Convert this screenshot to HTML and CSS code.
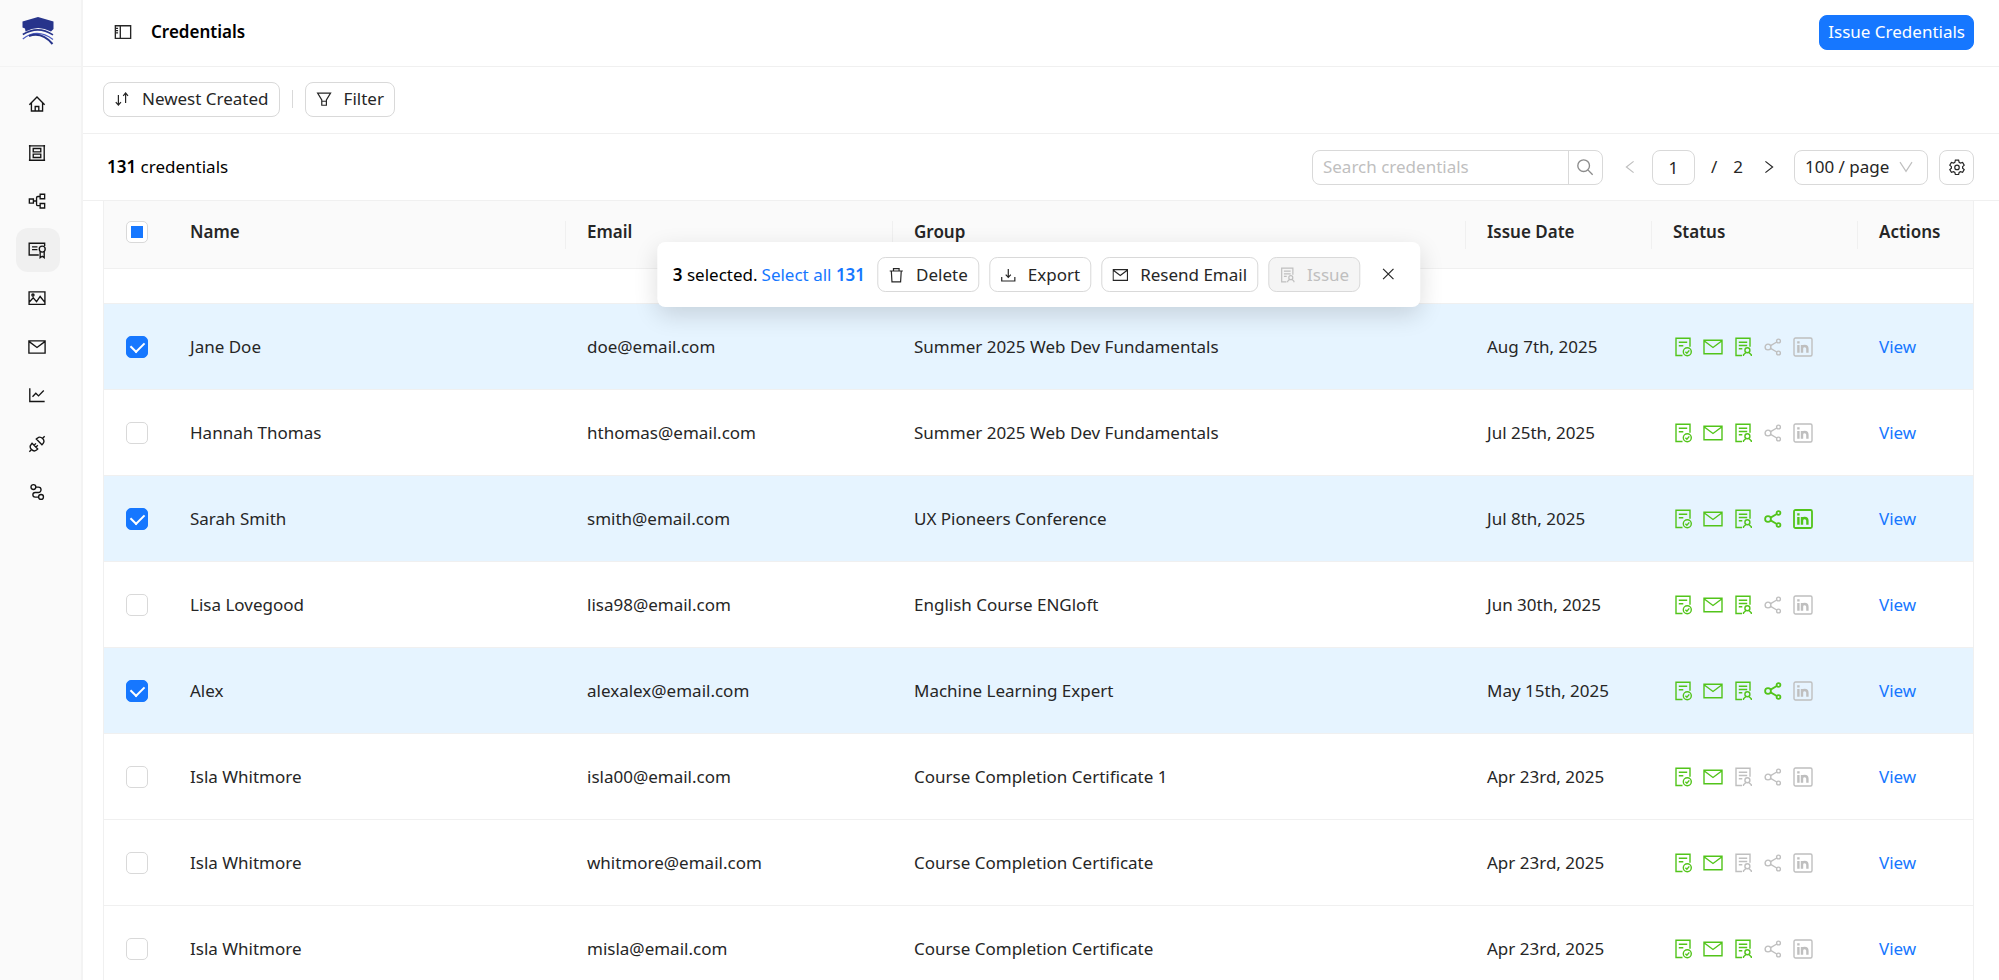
FILE: index.html
```
<!DOCTYPE html>
<html lang="en">

<head>
    <meta charset="UTF-8">
    <meta name="viewport" content="width=device-width, initial-scale=1.0">
    <title>Credentials</title>
    <link rel="stylesheet" href="styles.css">
</head>

<body>
    <!-- icon sprite -->
    <svg class="sprite" aria-hidden="true">
        <symbol id="i-home" viewBox="0 0 20 20"><path d="M1.5 10.8 10 2.3l8.500 8.500M3.800 9v8.800h12.400V9M8 17.800v-5h4v5" /></symbol>
        <symbol id="i-template" viewBox="0 0 20 20"><path d="M2 2h16v16H2zM5.800 5h8.400v3.800H5.800zM5.800 11.200h8.400V15H5.800zM1 2h2M17 2h2M1 18h2M17 18h2M2 1v2M18 1v2M2 17v2M18 17v2" /></symbol>
        <symbol id="i-tree" viewBox="0 0 20 20"><path d="M1.500 7.800h4.500v4.500H1.500zM13.500 2.500h5v5h-5zM13.500 12.800h5v5h-5zM6 10h3.500M13.500 5H11q-1.500 0-1.500 1.500v7q0 1.700 1.500 1.700h2.500" /></symbol>
        <symbol id="i-cert" viewBox="0 0 20 20"><path d="M12 15.500H1.300v-13h17.200v3M4.500 6.500h6M4.500 9.500h6M13.500 12v6.500l2.300-1.500 2.200 1.500V12" /><circle cx="15.800" cy="9" r="3.300" /></symbol>
        <symbol id="i-image" viewBox="0 0 20 20"><path d="M1.200 3.200h17.600v13.800H1.200zM1.500 14.500l4.300-4.700 3.700 4.200 4-5.700 5 6.200" /><circle cx="5.500" cy="6.800" r="1.200" /></symbol>
        <symbol id="i-mail" viewBox="0 0 20 20"><path d="M1 3.200h18v13.600H1zM1.300 4l8.700 6.500L18.700 4" /></symbol>
        <symbol id="i-chart" viewBox="0 0 20 20"><path d="M2 2.500v14.700h16.500M5 12l3.700-4 3 3L17.500 5" /></symbol>
        <symbol id="i-api" viewBox="0 0 20 20"><path d="M1.500 18.500l2.200-2.200M18.500 1.500l-2.200 2.200M4.500 9.200l6.300 6.300-1.300 1.200q-2.800 2.300-5.500-.5-3-3-.5-5.700zM9.200 4.500l6.300 6.300 1.200-1.300q2.300-2.800-.5-5.500-3-3-5.700-.5zM6.800 11.300l2-2M8.900 13.300l2-2" /></symbol>
        <symbol id="i-flow" viewBox="0 0 20 20"><circle cx="6" cy="4.500" r="2.700" /><circle cx="14.500" cy="15.500" r="2.700" /><path d="M8.700 4.500h2.800a2.700 2.700 0 0 1 0 6H8a2.500 2.500 0 0 0 0 5.200h3.800" /></symbol>
        <symbol id="i-panel" viewBox="0 0 20 20"><path d="M1.500 3h17v14h-17zM7 3v14M1.500 6h3M1.500 8.500h3M1.500 11h3" /></symbol>
        <symbol id="i-sort" viewBox="0 0 20 20"><path d="M5.500 5v12M2.200 14l3.300 3.500L8.700 14M14.500 15V3M11.500 6l3-3.500 3 3.500" /></symbol>
        <symbol id="i-filter" viewBox="0 0 20 20"><path d="M2 2.700h16.200l-5.200 8.500v6.600H7.200v-6.600zM7.200 12.800H13" /></symbol>
        <symbol id="i-search" viewBox="0 0 20 20"><circle cx="8.500" cy="8.500" r="6.500" /><path d="M13.200 13.200l5.300 5.300" /></symbol>
        <symbol id="i-left" viewBox="0 0 20 20"><path d="M14.500 3 5.500 10l9 7" /></symbol>
        <symbol id="i-right" viewBox="0 0 20 20"><path d="M5.500 3l9 7-9 7" /></symbol>
        <symbol id="i-down" viewBox="0 0 20 20"><path d="M2.500 4l7.500 11.500L17.500 4" /></symbol>
        <symbol id="i-gear" viewBox="0 0 20 20"><path d="M8 1.500h4l.7 2.700 1.600.9 2.700-.8 2 3.400-2 1.900v1.800l2 1.900-2 3.400-2.700-.8-1.600.9-.7 2.700H8l-.7-2.700-1.600-.9-2.700.8-2-3.400 2-1.900V9.600L1 7.700l2-3.400 2.700.8 1.600-.9z" /><circle cx="10" cy="10.500" r="2.800" /></symbol>
        <symbol id="i-trash" viewBox="0 0 20 20"><path d="M1.800 5h16.400M6.500 5V2h7v3M3.800 5l.8 13.500h10.800L16.200 5" /></symbol>
        <symbol id="i-export" viewBox="0 0 20 20"><path d="M10 2.500v10M6.800 9.500l3.200 3.500 3.200-3.500M1.800 12.500v5h16.400v-5" /></symbol>
        <symbol id="i-close" viewBox="0 0 20 20"><path d="M3.500 3.500l13 13M16.500 3.500l-13 13" /></symbol>
        <symbol id="i-done" viewBox="0 0 20 20"><path d="M9.500 18.500H3V1.300h14v8.500M5.800 5.200h8.400M5.800 8.700h4.500" /><circle cx="14.300" cy="14.800" r="4" /><path d="M12.400 14.800l1.500 1.500 2.400-2.900" /></symbol>
        <symbol id="i-issued" viewBox="0 0 20 20"><path d="M9 18.500H3V1.300h14v8.500M5.800 5.200h8.400M5.800 8.500h8.400M5.800 11.800h3.500M10.500 19v-1.300l2.200-2M18.300 19v-1.300l-2.200-2" /><circle cx="14.400" cy="13.300" r="2.500" /></symbol>
        <symbol id="i-share" viewBox="0 0 20 20"><circle cx="5" cy="10" r="2.900" /><circle cx="15.500" cy="4" r="1.900" /><circle cx="15.500" cy="16" r="1.900" /><path d="M7.600 8.600 13.800 5M7.600 11.400l6.200 3.600" /></symbol>
        <symbol id="i-linkedin" viewBox="0 0 20 20"><rect x="1" y="1" width="18" height="18" rx="1.500" /><path class="bold" d="M5.400 8v7.800M9 8v7.800M9 15.500v-4q0-2.500 2.700-2.500t2.700 2.700v4.100M5.400 4.200v2.400" /></symbol>
    </svg>

    <div class="app">
        <aside class="sidebar">
            <a href="#" class="logo" aria-label="Home">
                <svg viewBox="0 0 32 28" width="32" height="28">
                    <path fill="#27348b" d="M.5 4.500 16 0l15.500 4.500v7.500l-2.500 2.500Q16 7.500 3.500 14.500L3 11.500.5 10.500z" />
                    <path fill="none" stroke="#27348b" stroke-width="1.600" d="M.8 17.500Q16 8 31 17.800" />
                    <path fill="none" stroke="#4a5bc0" stroke-width="1.200" d="M.8 22Q15 10.500 31 22.500" />
                    <path fill="none" stroke="#27348b" stroke-width="2" d="M7 19q13-4.500 23.500 8" />
                </svg>
            </a>
            <nav class="nav">
                <a href="#" aria-label="Dashboard"><svg class="icon"><use href="#i-home" /></svg></a>
                <a href="#" aria-label="Groups"><svg class="icon"><use href="#i-template" /></svg></a>
                <a href="#" aria-label="Pathways"><svg class="icon"><use href="#i-tree" /></svg></a>
                <a href="#" class="active" aria-label="Credentials"><svg class="icon"><use href="#i-cert" /></svg></a>
                <a href="#" aria-label="Designs"><svg class="icon"><use href="#i-image" /></svg></a>
                <a href="#" aria-label="Emails"><svg class="icon"><use href="#i-mail" /></svg></a>
                <a href="#" aria-label="Analytics"><svg class="icon"><use href="#i-chart" /></svg></a>
                <a href="#" aria-label="Integrations"><svg class="icon"><use href="#i-api" /></svg></a>
                <a href="#" aria-label="Workflows"><svg class="icon"><use href="#i-flow" /></svg></a>
            </nav>
        </aside>

        <main class="main">
            <header class="bar bar-top">
                <button class="plain" aria-label="Toggle sidebar"><svg class="icon"><use href="#i-panel" /></svg></button>
                <h1>Credentials</h1>
                <button class="btn primary push">Issue Credentials</button>
            </header>

            <div class="bar bar-top">
                <button class="btn"><svg class="icon"><use href="#i-sort" /></svg>Newest Created</button>
                <span class="divider"></span>
                <button class="btn"><svg class="icon"><use href="#i-filter" /></svg>Filter</button>
            </div>

            <div class="bar">
                <p class="count"><b>131</b> credentials</p>
                <div class="search push">
                    <input type="text" placeholder="Search credentials" aria-label="Search credentials">
                    <button aria-label="Search"><svg class="icon"><use href="#i-search" /></svg></button>
                </div>
                <div class="pager">
                    <button class="plain off" aria-label="Previous page"><svg class="icon small"><use href="#i-left" /></svg></button>
                    <input type="text" value="1" aria-label="Page">
                    <span>/</span>
                    <span>2</span>
                    <button class="plain" aria-label="Next page"><svg class="icon small"><use href="#i-right" /></svg></button>
                </div>
                <div class="select">
                    <select aria-label="Page size">
                        <option>100 / page</option>
                        <option>50 / page</option>
                    </select>
                    <svg class="icon small"><use href="#i-down" /></svg>
                </div>
                <button class="btn square" aria-label="Table settings"><svg class="icon"><use href="#i-gear" /></svg></button>
            </div>

            <div class="table-wrap">
                <div class="selection">
                    <span><b>3</b> selected.</span>
                    <a href="#">Select all <b>131</b></a>
                    <div class="selection-actions">
                        <button class="btn"><svg class="icon"><use href="#i-trash" /></svg>Delete</button>
                        <button class="btn"><svg class="icon"><use href="#i-export" /></svg>Export</button>
                        <button class="btn"><svg class="icon"><use href="#i-mail" /></svg>Resend Email</button>
                        <button class="btn" disabled><svg class="icon"><use href="#i-issued" /></svg>Issue</button>
                        <button class="plain close" aria-label="Clear selection"><svg class="icon small"><use href="#i-close" /></svg></button>
                    </div>
                </div>

                <table>
                    <colgroup>
                        <col class="col-check">
                        <col class="col-name">
                        <col class="col-email">
                        <col>
                        <col class="col-date">
                        <col class="col-status">
                        <col class="col-actions">
                    </colgroup>
                    <thead>
                        <tr>
                            <th><input type="checkbox" class="partial" aria-label="Select all rows"></th>
                            <th>Name</th>
                            <th class="split">Email</th>
                            <th class="split">Group</th>
                            <th class="split">Issue Date</th>
                            <th class="split">Status</th>
                            <th class="split">Actions</th>
                        </tr>
                    </thead>
                    <tbody>
                        <tr class="cut"><td colspan="7"></td></tr>
                        <tr class="selected">
                            <td><input type="checkbox" checked aria-label="Select Jane Doe"></td>
                            <td>Jane Doe</td>
                            <td>doe@email.com</td>
                            <td>Summer 2025 Web Dev Fundamentals</td>
                            <td>Aug 7th, 2025</td>
                            <td><div class="status"><svg class="on"><use href="#i-done" /></svg><svg class="on"><use href="#i-mail" /></svg><svg class="on"><use href="#i-issued" /></svg><svg><use href="#i-share" /></svg><svg><use href="#i-linkedin" /></svg></div></td>
                            <td><a href="#">View</a></td>
                        </tr>
                        <tr>
                            <td><input type="checkbox" aria-label="Select Hannah Thomas"></td>
                            <td>Hannah Thomas</td>
                            <td>hthomas@email.com</td>
                            <td>Summer 2025 Web Dev Fundamentals</td>
                            <td>Jul 25th, 2025</td>
                            <td><div class="status"><svg class="on"><use href="#i-done" /></svg><svg class="on"><use href="#i-mail" /></svg><svg class="on"><use href="#i-issued" /></svg><svg><use href="#i-share" /></svg><svg><use href="#i-linkedin" /></svg></div></td>
                            <td><a href="#">View</a></td>
                        </tr>
                        <tr class="selected">
                            <td><input type="checkbox" checked aria-label="Select Sarah Smith"></td>
                            <td>Sarah Smith</td>
                            <td>smith@email.com</td>
                            <td>UX Pioneers Conference</td>
                            <td>Jul 8th, 2025</td>
                            <td><div class="status"><svg class="on"><use href="#i-done" /></svg><svg class="on"><use href="#i-mail" /></svg><svg class="on"><use href="#i-issued" /></svg><svg class="on strong"><use href="#i-share" /></svg><svg class="on strong"><use href="#i-linkedin" /></svg></div></td>
                            <td><a href="#">View</a></td>
                        </tr>
                        <tr>
                            <td><input type="checkbox" aria-label="Select Lisa Lovegood"></td>
                            <td>Lisa Lovegood</td>
                            <td>lisa98@email.com</td>
                            <td>English Course ENGloft</td>
                            <td>Jun 30th, 2025</td>
                            <td><div class="status"><svg class="on"><use href="#i-done" /></svg><svg class="on"><use href="#i-mail" /></svg><svg class="on"><use href="#i-issued" /></svg><svg><use href="#i-share" /></svg><svg><use href="#i-linkedin" /></svg></div></td>
                            <td><a href="#">View</a></td>
                        </tr>
                        <tr class="selected">
                            <td><input type="checkbox" checked aria-label="Select Alex"></td>
                            <td>Alex</td>
                            <td>alexalex@email.com</td>
                            <td>Machine Learning Expert</td>
                            <td>May 15th, 2025</td>
                            <td><div class="status"><svg class="on"><use href="#i-done" /></svg><svg class="on"><use href="#i-mail" /></svg><svg class="on"><use href="#i-issued" /></svg><svg class="on strong"><use href="#i-share" /></svg><svg><use href="#i-linkedin" /></svg></div></td>
                            <td><a href="#">View</a></td>
                        </tr>
                        <tr>
                            <td><input type="checkbox" aria-label="Select Isla Whitmore"></td>
                            <td>Isla Whitmore</td>
                            <td>isla00@email.com</td>
                            <td>Course Completion Certificate 1</td>
                            <td>Apr 23rd, 2025</td>
                            <td><div class="status"><svg class="on"><use href="#i-done" /></svg><svg class="on"><use href="#i-mail" /></svg><svg><use href="#i-issued" /></svg><svg><use href="#i-share" /></svg><svg><use href="#i-linkedin" /></svg></div></td>
                            <td><a href="#">View</a></td>
                        </tr>
                        <tr>
                            <td><input type="checkbox" aria-label="Select Isla Whitmore"></td>
                            <td>Isla Whitmore</td>
                            <td>whitmore@email.com</td>
                            <td>Course Completion Certificate</td>
                            <td>Apr 23rd, 2025</td>
                            <td><div class="status"><svg class="on"><use href="#i-done" /></svg><svg class="on"><use href="#i-mail" /></svg><svg><use href="#i-issued" /></svg><svg><use href="#i-share" /></svg><svg><use href="#i-linkedin" /></svg></div></td>
                            <td><a href="#">View</a></td>
                        </tr>
                        <tr>
                            <td><input type="checkbox" aria-label="Select Isla Whitmore"></td>
                            <td>Isla Whitmore</td>
                            <td>misla@email.com</td>
                            <td>Course Completion Certificate</td>
                            <td>Apr 23rd, 2025</td>
                            <td><div class="status"><svg class="on"><use href="#i-done" /></svg><svg class="on"><use href="#i-mail" /></svg><svg class="on"><use href="#i-issued" /></svg><svg><use href="#i-share" /></svg><svg><use href="#i-linkedin" /></svg></div></td>
                            <td><a href="#">View</a></td>
                        </tr>
                    </tbody>
                </table>
            </div>
        </main>
    </div>
</body>

</html>
```
FILE: styles.css
```
* {
    box-sizing: border-box;
}

body {
    margin: 0;
    height: 100vh;
    overflow: hidden;
    background: #fff;
    color: #262626;
    font-family: "Noto Sans", "Open Sans", sans-serif;
    font-size: 17px;
    line-height: 24px;
}

button,
input,
select {
    font: inherit;
    color: inherit;
}

button {
    cursor: pointer;
}

a {
    color: #1677ff;
    text-decoration: none;
}

b {
    font-weight: 600;
}

.sprite {
    display: none;
}

.icon {
    width: 18px;
    height: 18px;
    flex: none;
    fill: none;
    stroke: currentColor;
    stroke-width: 1.5;
}

.icon.small,
.btn .icon {
    width: 16px;
    height: 16px;
}

.bold {
    stroke-width: 2.4;
}

.app {
    display: flex;
    height: 100vh;
}

/* sidebar */
.sidebar {
    flex: none;
    width: 83px;
    background: #fafafa;
    border-right: 2px solid #f3f3f3;
}

.logo {
    display: flex;
    align-items: center;
    height: 67px;
    padding: 0 0 4px 22px;
    border-bottom: 1px solid #f3f3f3;
}

.nav {
    display: flex;
    flex-direction: column;
    justify-content: space-between;
    min-height: 432px;
    margin: 15px 0 0 16px;
}

.nav a {
    display: flex;
    align-items: center;
    justify-content: center;
    width: 44px;
    height: 44px;
    padding-right: 3px;
    border-radius: 12px;
    color: #141414;
}

.nav a.active {
    background: #f0f0f0;
}

/* top bars */
.main {
    flex: 1;
    min-width: 0;
}

.bar {
    display: flex;
    align-items: center;
    height: 67px;
    padding: 0 25px 0 20px;
    border-bottom: 1px solid #f0f0f0;
}

.bar-top {
    padding-bottom: 2px;
}

.bar h1 {
    margin: 0 0 0 8px;
    font-size: 17px;
    font-weight: 600;
    color: #000;
}

.push {
    margin-left: auto;
}

.btn {
    display: inline-flex;
    align-items: center;
    gap: 12px;
    height: 35px;
    padding: 0 10px;
    border: 1px solid #d9d9d9;
    border-radius: 8px;
    background: #fff;
    white-space: nowrap;
}

.btn:hover {
    border-color: #1677ff;
}

.btn.primary {
    padding: 0 8px;
    border-color: #1677ff;
    background: #1677ff;
    color: #fff;
}

.btn.square {
    width: 35px;
    padding: 0;
    justify-content: center;
}

.btn:disabled {
    background: #f5f5f5;
    border-color: #d9d9d9;
    color: #bfbfbf;
    cursor: default;
}

.plain {
    display: inline-flex;
    align-items: center;
    justify-content: center;
    width: 40px;
    height: 34px;
    padding: 0;
    border: 0;
    background: none;
}

.plain.off {
    color: #bfbfbf;
}

.divider {
    width: 1px;
    height: 18px;
    margin: 0 12px;
    background: #d9d9d9;
}

.count {
    margin: 0 0 0 4px;
    color: #000;
}

.search {
    display: flex;
    width: 291px;
    height: 35px;
    border: 1px solid #d9d9d9;
    border-radius: 8px;
}

.search input {
    flex: 1;
    min-width: 0;
    padding: 0 10px;
    border: 0;
    background: none;
    outline: none;
}

.search input::placeholder {
    color: #bfbfbf;
}

.search button {
    display: flex;
    align-items: center;
    justify-content: center;
    width: 34px;
    padding: 0;
    border: 0;
    border-left: 1px solid #d9d9d9;
    background: none;
    color: #8c8c8c;
}

.pager {
    display: flex;
    align-items: center;
    margin: 0 5px 0 7px;
}

.pager input {
    width: 43px;
    height: 35px;
    margin: 0 16px 0 2px;
    padding: 0;
    border: 1px solid #d9d9d9;
    border-radius: 8px;
    text-align: center;
}

.pager span {
    margin-right: 16px;
}

.pager span + span {
    margin-right: 6px;
}

.select {
    display: flex;
    align-items: center;
    margin-right: 11px;
}

.select select {
    width: 134px;
    height: 35px;
    padding: 0 10px;
    border: 1px solid #d9d9d9;
    border-radius: 8px;
    background: #fff;
    appearance: none;
}

.select .icon {
    margin-left: -30px;
    margin-right: 14px;
    color: #bfbfbf;
    pointer-events: none;
}

/* table */
.table-wrap {
    position: relative;
    margin: 0 25px 0 20px;
}

table {
    width: 100%;
    table-layout: fixed;
    border-collapse: separate;
    border-spacing: 0;
    border-left: 1px solid #f0f0f0;
    border-right: 1px solid #f0f0f0;
}

.col-check {
    width: 64px;
}

.col-name {
    width: 397px;
}

.col-email {
    width: 327px;
}

.col-date {
    width: 186px;
}

.col-status {
    width: 206px;
}

.col-actions {
    width: 116px;
}

th,
td {
    height: 86px;
    padding: 0 22px;
    border-bottom: 1px solid #f0f0f0;
    text-align: left;
    white-space: nowrap;
}

th {
    height: 68px;
    padding-bottom: 6px;
    background: #fafafa;
    font-weight: 600;
}

.split {
    background: linear-gradient(#f0f0f0, #f0f0f0) left center / 1px 28px no-repeat #fafafa;
}

.cut td {
    height: 35px;
}

.selected td {
    background: #e6f4ff;
}

input[type="checkbox"] {
    display: flex;
    align-items: center;
    justify-content: center;
    width: 22px;
    height: 22px;
    margin: 0;
    border: 1px solid #d9d9d9;
    border-radius: 5px;
    background: #fff;
    appearance: none;
}

input[type="checkbox"]:checked {
    border-color: #1677ff;
    background: #1677ff;
}

input[type="checkbox"]:checked::after {
    content: "";
    width: 7px;
    height: 11px;
    margin-bottom: 3px;
    border: solid #fff;
    border-width: 0 2px 2px 0;
    transform: rotate(45deg);
}

input.partial::after {
    content: "";
    width: 12px;
    height: 12px;
    background: #1677ff;
}

.status {
    display: flex;
    gap: 10px;
}

.status svg {
    width: 20px;
    height: 20px;
    fill: none;
    stroke: #bfbfbf;
    stroke-width: 1.4;
}

.status svg.on {
    stroke: #52c41a;
}

.status svg.strong {
    stroke-width: 1.8;
}

/* floating bulk actions */
.selection {
    position: absolute;
    top: 41px;
    left: 50%;
    display: flex;
    align-items: center;
    gap: 4px;
    height: 65px;
    padding: 0 14px 0 16px;
    border-radius: 8px;
    background: #fff;
    box-shadow: 0 8px 24px rgba(0, 0, 0, 0.14);
    color: #000;
    white-space: nowrap;
    transform: translateX(-50%);
}

.selection-actions {
    display: flex;
    gap: 10px;
    margin-left: 8px;
    color: #262626;
}

.plain.close {
    width: 36px;
}
```
